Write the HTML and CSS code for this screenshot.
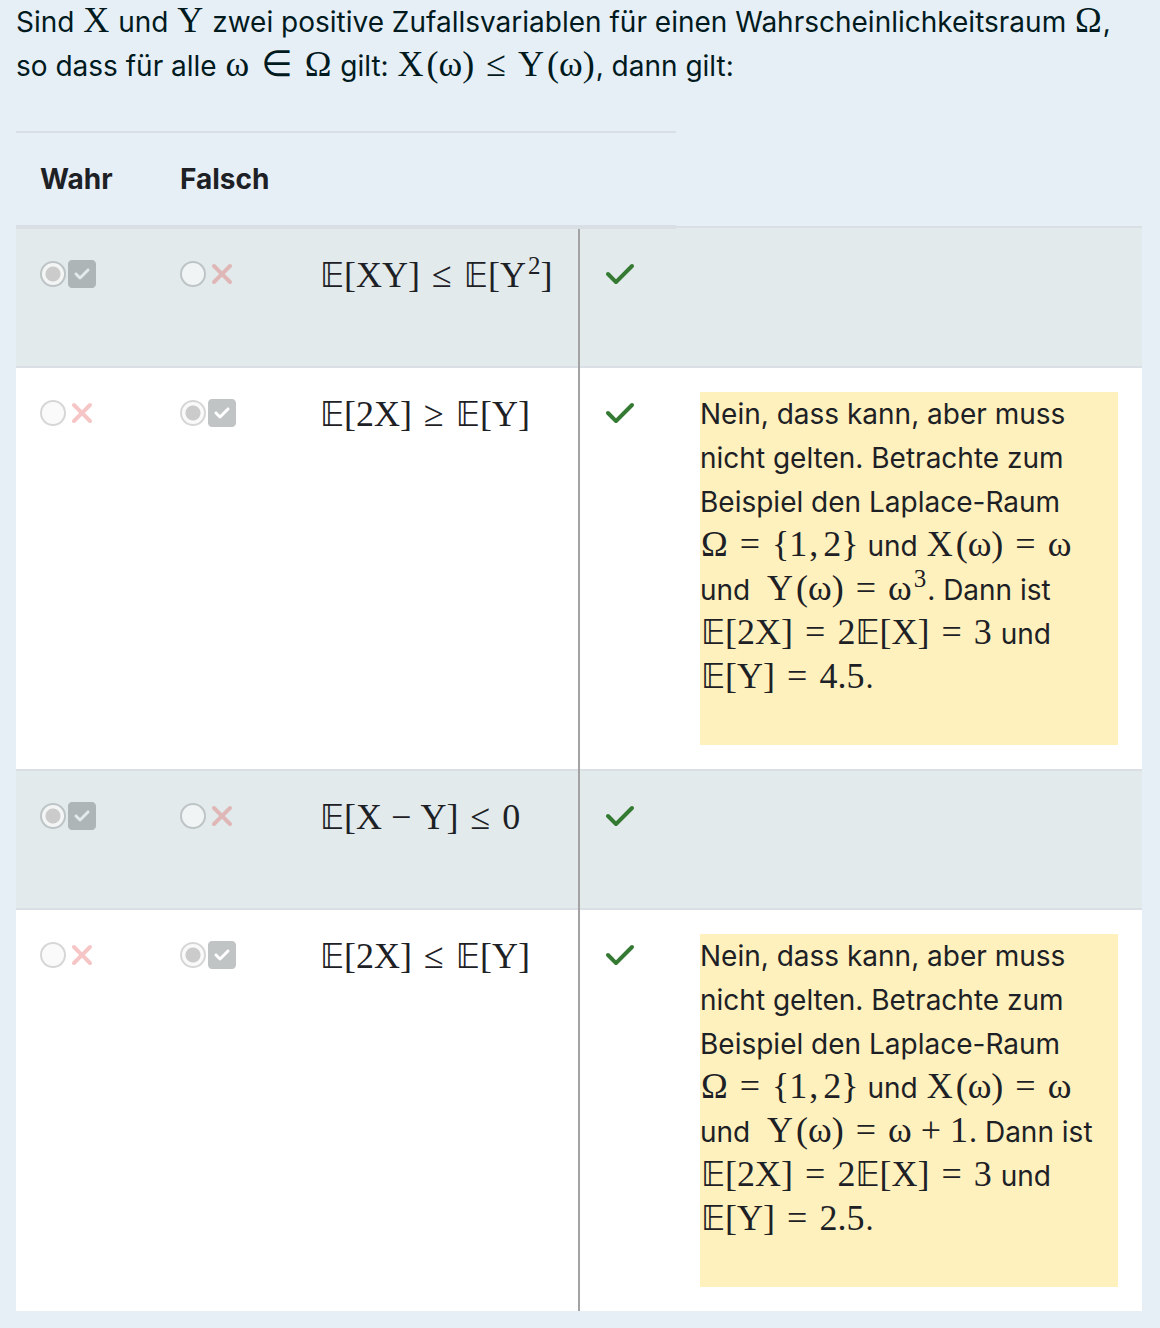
FILE: index.html
```
<!DOCTYPE html>
<html lang="de">
<head>
<meta charset="utf-8">
<meta name="viewport" content="width=device-width, initial-scale=1">
<title>Zufallsvariablen</title>
<link rel="stylesheet" href="styles.css">
</head>
<body>
<svg class="sprite" aria-hidden="true">
  <symbol id="check" viewBox="0 0 448 512"><path d="M438.6 105.4c12.5 12.5 12.5 32.8 0 45.3l-256 256c-12.5 12.5-32.8 12.5-45.3 0l-128-128c-12.5-12.5-12.5-32.8 0-45.3s32.8-12.5 45.3 0L160 338.7 393.4 105.4c12.5-12.5 32.8-12.5 45.3 0z"/></symbol>
  <symbol id="cross" viewBox="0 0 384 512"><path d="M342.6 150.6c12.5-12.5 12.5-32.8 0-45.3s-32.8-12.5-45.3 0L192 210.7 86.6 105.4c-12.5-12.5-32.8-12.5-45.3 0s-12.5 32.8 0 45.3L146.7 256 41.4 361.4c-12.5 12.5-12.5 32.8 0 45.3s32.8 12.5 45.3 0L192 301.3 297.4 406.6c12.5 12.5 32.8 12.5 45.3 0s12.5-32.8 0-45.3L237.3 256 342.6 150.6z"/></symbol>
  <symbol id="square-check" viewBox="0 0 448 512"><path fill-rule="evenodd" d="M64 32C28.7 32 0 60.7 0 96V416c0 35.3 28.7 64 64 64H384c35.3 0 64-28.7 64-64V96c0-35.3-28.7-64-64-64H64zM337 209L209 337c-9.4 9.4-24.6 9.4-33.9 0l-64-64c-9.4-9.4-9.4-24.6 0-33.9s24.6-9.4 33.9 0l47 47L303 175c9.4-9.4 24.6-9.4 33.9 0s9.4 24.6 0 33.9z"/></symbol>
</svg>
<main class="question">
  <p class="prompt">Sind <span class="math">X</span>&nbsp;und <span class="math">Y</span>&nbsp;zwei positive Zufallsvariablen für einen Wahrscheinlichkeitsraum <span class="math">Ω</span>, so dass für alle <span class="math">ω<span class="rel">∈</span>Ω</span> gilt: <span class="math">X<span class="arg">(ω)</span><span class="rel">≤</span>Y<span class="arg">(ω)</span></span>, dann gilt:</p>

  <table class="answers">
    <colgroup><col class="col-choice"><col class="col-choice"><col class="col-formula"><col class="col-mark"><col></colgroup>
    <thead>
      <tr><th scope="col">Wahr</th><th scope="col">Falsch</th><th></th><th></th></tr>
    </thead>
    <tbody>
      <tr>
        <td><div class="choice"><input type="radio" name="a1" aria-label="Wahr" checked disabled><svg class="icon"><use href="#square-check"/></svg></div></td>
        <td><div class="choice"><input type="radio" name="a1" aria-label="Falsch" disabled><svg class="icon wrong"><use href="#cross"/></svg></div></td>
        <td class="statement"><div class="formula math"><span class="bb">𝔼</span>[XY]<span class="rel">≤</span><span class="bb">𝔼</span>[Y<sup>2</sup>]</div></td>
        <td><div class="choice"><svg class="mark"><use href="#check"/></svg></div></td>
        <td></td>
      </tr>
      <tr>
        <td><div class="choice"><input type="radio" name="a2" aria-label="Wahr" disabled><svg class="icon wrong"><use href="#cross"/></svg></div></td>
        <td><div class="choice"><input type="radio" name="a2" aria-label="Falsch" checked disabled><svg class="icon"><use href="#square-check"/></svg></div></td>
        <td class="statement"><div class="formula math"><span class="bb">𝔼</span>[2X]<span class="rel">≥</span><span class="bb">𝔼</span>[Y]</div></td>
        <td><div class="choice"><svg class="mark"><use href="#check"/></svg></div></td>
        <td><div class="note">Nein, dass kann, aber muss nicht gelten. Betrachte zum Beispiel den Laplace-Raum <span class="math">Ω<span class="rel">=</span>{1<span class="comma">,</span>2}</span> und <span class="math">X<span class="arg">(ω)</span><span class="rel">=</span>ω</span> und&nbsp; <span class="math">Y<span class="arg">(ω)</span><span class="rel">=</span>ω<sup>3</sup></span>. Dann ist <span class="math"><span class="bb">𝔼</span>[2X]<span class="rel">=</span>2<span class="bb">𝔼</span>[X]<span class="rel">=</span>3</span> und <span class="math"><span class="bb">𝔼</span>[Y]<span class="rel">=</span>4.5</span>.</div></td>
      </tr>
      <tr>
        <td><div class="choice"><input type="radio" name="a3" aria-label="Wahr" checked disabled><svg class="icon"><use href="#square-check"/></svg></div></td>
        <td><div class="choice"><input type="radio" name="a3" aria-label="Falsch" disabled><svg class="icon wrong"><use href="#cross"/></svg></div></td>
        <td class="statement"><div class="formula math"><span class="bb">𝔼</span>[X<span class="op">−</span>Y]<span class="rel">≤</span>0</div></td>
        <td><div class="choice"><svg class="mark"><use href="#check"/></svg></div></td>
        <td></td>
      </tr>
      <tr>
        <td><div class="choice"><input type="radio" name="a4" aria-label="Wahr" disabled><svg class="icon wrong"><use href="#cross"/></svg></div></td>
        <td><div class="choice"><input type="radio" name="a4" aria-label="Falsch" checked disabled><svg class="icon"><use href="#square-check"/></svg></div></td>
        <td class="statement"><div class="formula math"><span class="bb">𝔼</span>[2X]<span class="rel">≤</span><span class="bb">𝔼</span>[Y]</div></td>
        <td><div class="choice"><svg class="mark"><use href="#check"/></svg></div></td>
        <td><div class="note">Nein, dass kann, aber muss nicht gelten. Betrachte zum Beispiel den Laplace-Raum <span class="math">Ω<span class="rel">=</span>{1<span class="comma">,</span>2}</span> und <span class="math">X<span class="arg">(ω)</span><span class="rel">=</span>ω</span> und&nbsp; <span class="math">Y<span class="arg">(ω)</span><span class="rel">=</span>ω<span class="op">+</span>1</span>. Dann ist <span class="math"><span class="bb">𝔼</span>[2X]<span class="rel">=</span>2<span class="bb">𝔼</span>[X]<span class="rel">=</span>3</span> und <span class="math"><span class="bb">𝔼</span>[Y]<span class="rel">=</span>2.5</span>.</div></td>
      </tr>
    </tbody>
  </table>
</main>
</body>
</html>
```
FILE: styles.css
```
* {
  box-sizing: border-box;
}

body {
  margin: 0;
  background: #e7eff6;
  color: #1d2125;
  font-family: Inter, "Liberation Sans", sans-serif;
  font-size: 28px;
  line-height: 44px;
}

.sprite {
  display: none;
}

.question {
  padding: 0 18px 16px 16px;
}

.prompt {
  margin: 0 0 43px;
  color: #001a1e;
}

/* Formulas */
.math {
  font-family: "Liberation Serif", "DejaVu Sans", serif;
  font-size: 36px;
  line-height: 1;
  white-space: nowrap;
}

.prompt .math,
.note .math {
  margin: 0 1px;
}

.math sup {
  margin-left: 2px;
  font-size: 25px;
  line-height: 0;
  vertical-align: 13px;
}

.bb {
  font-family: "DejaVu Sans", sans-serif;
  font-size: 33px;
  line-height: 1;
}

.arg {
  margin-left: 3px;
}

.rel {
  margin: 0 12px;
}

.op {
  margin: 0 9px;
}

.comma {
  margin: 0 5px 0 2px;
}

/* Answer table */
.answers {
  width: 100%;
  table-layout: fixed;
  border-collapse: collapse;
}

.col-choice {
  width: 140px;
}

.col-formula {
  width: 283px;
}

.col-mark {
  width: 97px;
}

th,
td {
  padding: 24px;
  text-align: left;
  vertical-align: top;
  border-top: 2px solid #dadfe6;
}

th {
  font-weight: 700;
  border-bottom: 4px solid #dadfe6;
}

tbody tr {
  background: #fff;
}

tbody tr:nth-child(odd) {
  background: #e2eaec;
}

.statement {
  border-right: 2px solid #a3a3a3;
}

.formula {
  padding-bottom: 45px;
  line-height: 44px;
}

.choice {
  display: flex;
  align-items: center;
  gap: 2px;
  height: 42px;
}

.choice input {
  appearance: none;
  flex: none;
  width: 26px;
  height: 26px;
  margin: 0;
  border: 2px solid rgba(0, 0, 0, 0.16);
  border-radius: 50%;
  background: rgba(248, 248, 248, 0.7);
  background-clip: padding-box;
}

.choice input:checked {
  background: radial-gradient(circle, #cbcbcb 7px, rgba(248, 248, 248, 0.8) 8px);
  background-clip: padding-box;
}

.icon {
  width: 28px;
  height: 32px;
  fill: rgba(50, 60, 60, 0.3);
}

.wrong {
  fill: rgba(220, 50, 47, 0.28);
}

.mark {
  width: 32px;
  height: 32px;
  fill: #357a32;
}

.note {
  padding-bottom: 45px;
  background: #fef1be;
}
```
